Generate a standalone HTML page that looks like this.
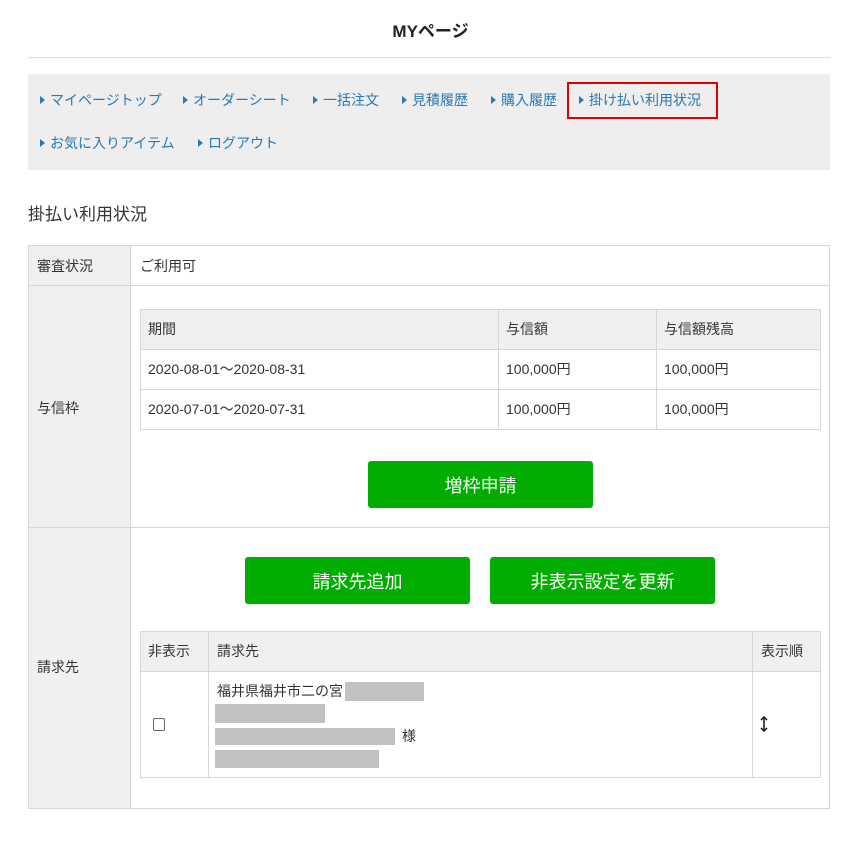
<!DOCTYPE html>
<html><head><meta charset="utf-8"><style>
*{margin:0;padding:0;box-sizing:border-box}
body{width:861px;height:844px;background:#fff;position:relative;font-family:"Liberation Sans","Noto Sans CJK JP",sans-serif;color:#333;font-size:14px;overflow:hidden}
.a{position:absolute}
.t{position:absolute;white-space:nowrap;line-height:1}
.nav .t{color:#2a78b5;font-size:14px}
.nav .t:before{content:"";display:inline-block;border-left:5px solid #2a78b5;border-top:4px solid transparent;border-bottom:4px solid transparent;margin-right:5px;vertical-align:1px}
.b{border:1px solid #d6d6d6}
.g{background:#c2c2c2}
.btn{position:absolute;background:#00ad00;color:#fff;font-size:18px;border-radius:3px;display:flex;align-items:center;justify-content:center}
</style></head><body>
<div class="t" style="left:0;width:861px;text-align:center;top:23px;font-size:17px;font-weight:bold;color:#222">MYページ</div>
<div class="a" style="left:28px;top:57px;width:802px;height:1px;background:#ddd"></div>
<div class="a nav" style="left:28px;top:74px;width:802px;height:96px;background:#eeeeee">
<div class="t" style="left:12px;top:19px">マイページトップ</div>
<div class="t" style="left:155px;top:19px">オーダーシート</div>
<div class="t" style="left:285px;top:19px">一括注文</div>
<div class="t" style="left:374px;top:19px">見積履歴</div>
<div class="t" style="left:463px;top:19px">購入履歴</div>
<div class="t" style="left:551px;top:19px">掛け払い利用状況</div>
<div class="a" style="left:539px;top:8px;width:151px;height:37px;border:2px solid #e00000"></div>
<div class="t" style="left:12px;top:62px">お気に入りアイテム</div>
<div class="t" style="left:170px;top:62px">ログアウト</div>
</div>
<div class="t" style="left:28px;top:206px;font-size:17px">掛払い利用状況</div>
<!-- outer table -->
<div class="a b" style="left:28px;top:245px;width:802px;height:564px"></div>
<div class="a" style="left:29px;top:246px;width:101px;height:562px;background:#f0f0f0"></div>
<div class="a" style="left:130px;top:245px;width:1px;height:563px;background:#d6d6d6"></div>
<div class="a" style="left:28px;top:285px;width:802px;height:1px;background:#d6d6d6"></div>
<div class="a" style="left:28px;top:527px;width:802px;height:1px;background:#d6d6d6"></div>
<div class="t" style="left:37px;top:259px">審査状況</div>
<div class="t" style="left:140px;top:259px">ご利用可</div>
<div class="t" style="left:37px;top:401px">与信枠</div>
<div class="t" style="left:37px;top:660px">請求先</div>
<!-- inner table 1 -->
<div class="a b" style="left:140px;top:309px;width:681px;height:121px"></div>
<div class="a" style="left:141px;top:310px;width:679px;height:39px;background:#f0f0f0"></div>
<div class="a" style="left:140px;top:349px;width:681px;height:1px;background:#d6d6d6"></div>
<div class="a" style="left:140px;top:389px;width:681px;height:1px;background:#d6d6d6"></div>
<div class="a" style="left:498px;top:309px;width:1px;height:121px;background:#d6d6d6"></div>
<div class="a" style="left:656px;top:309px;width:1px;height:121px;background:#d6d6d6"></div>
<div class="t" style="left:148px;top:322px">期間</div>
<div class="t" style="left:506px;top:322px">与信額</div>
<div class="t" style="left:664px;top:322px">与信額残高</div>
<div class="t" style="left:148px;top:362px">2020-08-01〜2020-08-31</div>
<div class="t" style="left:506px;top:362px">100,000円</div>
<div class="t" style="left:664px;top:362px">100,000円</div>
<div class="t" style="left:148px;top:402px">2020-07-01〜2020-07-31</div>
<div class="t" style="left:506px;top:402px">100,000円</div>
<div class="t" style="left:664px;top:402px">100,000円</div>
<div class="btn" style="left:368px;top:461px;width:225px;height:47px">増枠申請</div>
<div class="btn" style="left:245px;top:557px;width:225px;height:47px">請求先追加</div>
<div class="btn" style="left:490px;top:557px;width:225px;height:47px">非表示設定を更新</div>
<!-- inner table 2 -->
<div class="a b" style="left:140px;top:631px;width:681px;height:147px"></div>
<div class="a" style="left:141px;top:632px;width:679px;height:39px;background:#f0f0f0"></div>
<div class="a" style="left:140px;top:671px;width:681px;height:1px;background:#d6d6d6"></div>
<div class="a" style="left:208px;top:631px;width:1px;height:147px;background:#d6d6d6"></div>
<div class="a" style="left:752px;top:631px;width:1px;height:147px;background:#d6d6d6"></div>
<div class="t" style="left:148px;top:644px">非表示</div>
<div class="t" style="left:217px;top:644px">請求先</div>
<div class="t" style="left:761px;top:644px">表示順</div>
<div class="a" style="left:153px;top:718px;width:12px;height:13px;border:1px solid #666;border-radius:2px"></div>
<div class="t" style="left:217px;top:684px">福井県福井市二の宮</div>
<div class="a g" style="left:345px;top:682px;width:79px;height:19px"></div>
<div class="a g" style="left:215px;top:704px;width:110px;height:19px"></div>
<div class="a g" style="left:215px;top:728px;width:180px;height:17px"></div>
<div class="t" style="left:402px;top:729px">様</div>
<div class="a g" style="left:215px;top:750px;width:164px;height:18px"></div>
<svg class="a" style="left:760px;top:716px" width="8" height="16" viewBox="0 0 8 16"><path d="M4 1V15M1 4L4 1L7 4M1 12L4 15L7 12" stroke="#222" stroke-width="1.6" fill="none"/></svg>
</body></html>
